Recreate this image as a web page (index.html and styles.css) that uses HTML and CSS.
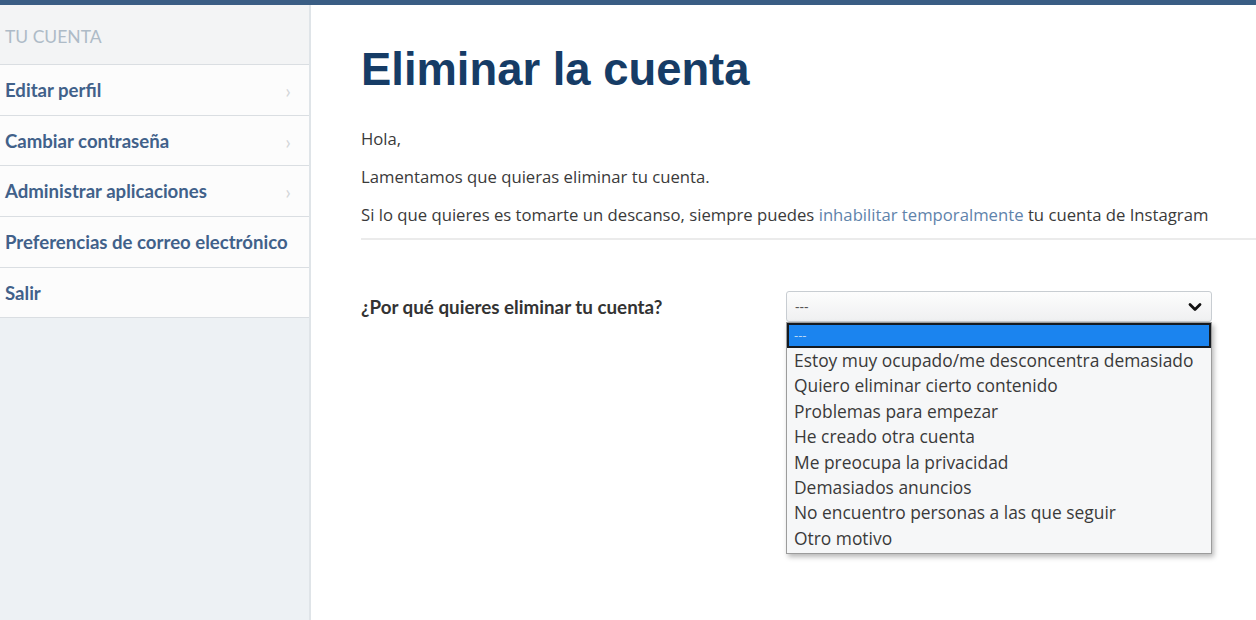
FILE: index.html
```html
<!DOCTYPE html>
<html lang="es">
<head>
<meta charset="utf-8">
<title>Eliminar la cuenta</title>
<link rel="stylesheet" href="styles.css">
</head>
<body>
<div class="topbar"></div>
<div class="layout">
  <aside class="sidebar">
    <div class="side-head">TU CUENTA</div>
    <a class="side-item" href="#">Editar perfil <span class="chev">›</span></a>
    <a class="side-item" href="#">Cambiar contraseña <span class="chev">›</span></a>
    <a class="side-item" href="#">Administrar aplicaciones <span class="chev">›</span></a>
    <a class="side-item" href="#">Preferencias de correo electrónico</a>
    <a class="side-item" href="#">Salir</a>
  </aside>
  <main class="main">
    <h1 class="title">Eliminar la cuenta</h1>
    <p class="txt">Hola,</p>
    <p class="txt">Lamentamos que quieras eliminar tu cuenta.</p>
    <p class="txt">Si lo que quieres es tomarte un descanso, siempre puedes <a class="link" href="#">inhabilitar temporalmente</a> tu cuenta de Instagram</p>
    <div class="divider"></div>
    <div class="form-row">
      <label class="question">¿Por qué quieres eliminar tu cuenta?</label>
      <div class="select-wrap">
        <div class="select">
          <span class="select-val">---</span>
          <svg class="select-arrow" width="14" height="10" viewBox="0 0 14 10"><polyline points="2,2.5 7,7.5 12,2.5" fill="none" stroke="#111" stroke-width="2.8" stroke-linecap="round" stroke-linejoin="round"/></svg>
        </div>
        <ul class="options">
          <li class="opt opt-active">---</li>
          <li class="opt">Estoy muy ocupado/me desconcentra demasiado</li>
          <li class="opt">Quiero eliminar cierto contenido</li>
          <li class="opt">Problemas para empezar</li>
          <li class="opt">He creado otra cuenta</li>
          <li class="opt">Me preocupa la privacidad</li>
          <li class="opt">Demasiados anuncios</li>
          <li class="opt">No encuentro personas a las que seguir</li>
          <li class="opt">Otro motivo</li>
        </ul>
      </div>
    </div>
  </main>
</div>
</body>
</html>
```
FILE: styles.css
```css
* { box-sizing: border-box; }
html, body { margin: 0; padding: 0; }
body {
  width: 1256px;
  height: 620px;
  overflow: hidden;
  background: #ffffff;
  font-family: "Open Sans", "Noto Sans", sans-serif;
  color: #383838;
}
.topbar {
  height: 5px;
  background: #3a5d84;
}
.layout {
  display: flex;
  height: 615px;
}
.sidebar {
  width: 311px;
  flex: none;
  background: #edf1f4;
  border-right: 2px solid #dfe4e8;
  display: flex;
  flex-direction: column;
}
.side-head {
  height: 60px;
  background: #f3f4f5;
  border-bottom: 1px solid #dadee2;
  display: flex;
  align-items: center;
  padding: 4px 0 0 5px;
  font-family: "Lato", sans-serif;
  font-size: 17.5px;
  font-weight: 400;
  color: #aebbc7;
}
.side-item {
  height: 50.7px;
  flex: none;
  background: #fcfcfc;
  border-bottom: 1px solid #dadee2;
  display: flex;
  align-items: center;
  justify-content: space-between;
  padding: 0 18px 0 5px;
  font-family: "Lato", sans-serif;
  font-size: 18.6px;
  font-weight: 700;
  color: #41618a;
  text-decoration: none;
}
.chev {
  color: #d3d6d9;
  font-size: 20px;
  font-weight: 400;
}
.main {
  flex: 1;
  padding: 38px 0 0 50px;
}
.title {
  margin: 0;
  font-family: "Liberation Sans", Arial, sans-serif;
  font-size: 45.4px;
  line-height: 54px;
  font-weight: 700;
  color: #163c66;
}
.txt {
  margin: 0;
  font-size: 16.7px;
  line-height: 38px;
  color: #3a3a3a;
}
.title + .txt { margin-top: 23px; }
.link {
  color: #5f83ab;
  text-decoration: none;
}
.divider {
  margin-top: 4px;
  height: 2px;
  background: #ebebeb;
}
.form-row {
  margin-top: 51px;
  display: flex;
  align-items: flex-start;
}
.question {
  width: 425px;
  flex: none;
  padding-top: 4px;
  font-family: "Lato", sans-serif;
  font-size: 18.8px;
  font-weight: 700;
  color: #333333;
}
.select-wrap {
  position: relative;
  width: 426px;
}
.select {
  height: 31px;
  border: 1px solid #c8cdd2;
  border-radius: 3px;
  background: linear-gradient(#fdfdfd, #eff0f1);
  display: flex;
  align-items: center;
  justify-content: space-between;
  padding: 0 9px 0 8px;
  font-size: 14px;
  color: #555;
}
.options {
  position: absolute;
  left: 0;
  top: 31px;
  width: 426px;
  margin: 0;
  padding: 0 0 2px 0;
  list-style: none;
  background: #f6f7f8;
  border: 1px solid #9c9c9c;
  box-shadow: 2px 3px 5px rgba(0,0,0,0.28);
}
.opt {
  height: 25.4px;
  line-height: 25.4px;
  padding-left: 7px;
  font-size: 17.4px;
  color: #3a3a3a;
  white-space: nowrap;
}
.opt-active {
  height: 25px;
  line-height: 21px;
  background: #1b84ef;
  border: 2px solid #151a20;
  padding-left: 5px;
  color: #bcd8f5;
  font-size: 13px;
}
```
